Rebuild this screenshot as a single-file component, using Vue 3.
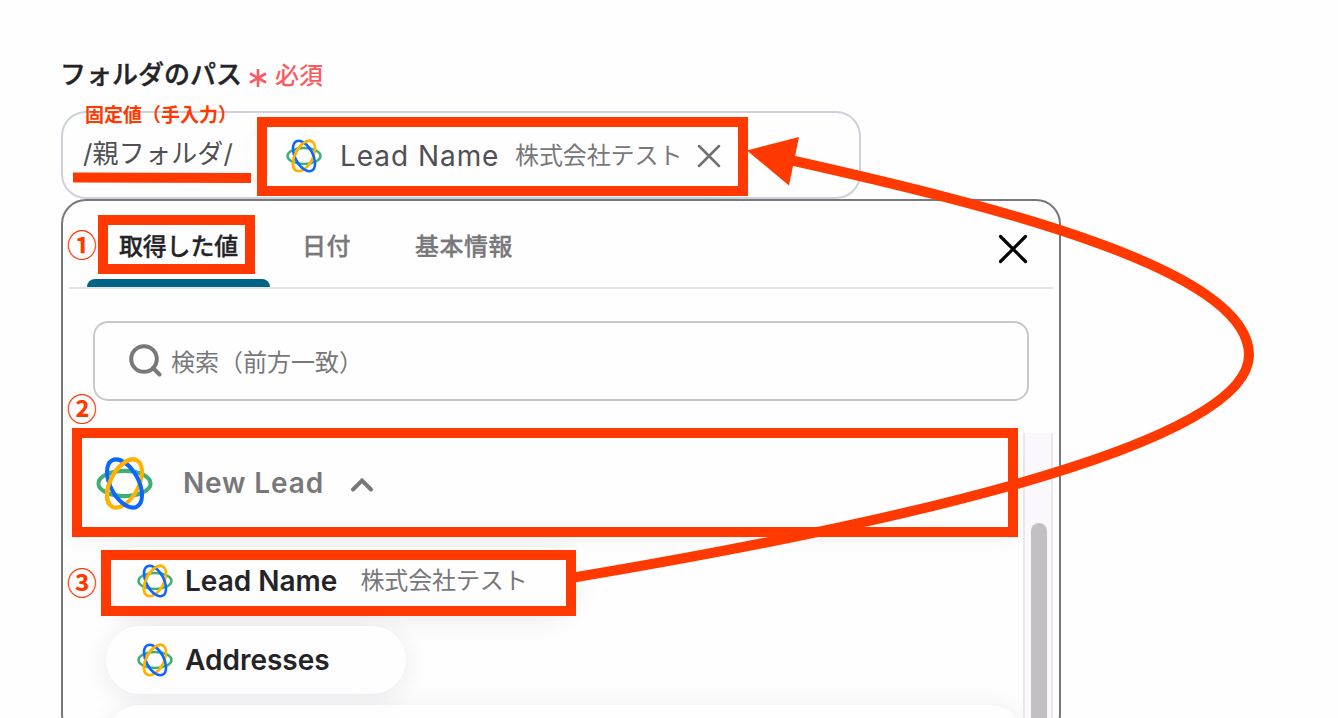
<template>
    <div class="page">
        <svg class="defs" width="0" height="0">
            <symbol id="lead-icon" viewBox="-28 -28 56 56">
                <g fill="none" stroke-width="4">
                    <ellipse rx="25.600" ry="12.400" stroke="#42ae76" />
                    <ellipse rx="25.800" ry="13.800" stroke="#ffb300" transform="rotate(-62)" />
                    <ellipse rx="25.800" ry="13.800" stroke="#0b66ff" transform="rotate(62)" />
                    <path d="M12.100 -22.800A25.800 13.800 -62 0 0 -12.100 22.800" stroke="#ffb300" />
                </g>
            </symbol>
        </svg>

        <div class="field-label">
            <span class="label-name">フォルダのパス</span>
            <svg class="asterisk" width="20" height="20" viewBox="-10 -10 20 20">
                <path d="M0 -9V9M-8 -4.5L8 4.5M-8 4.5L8 -4.5" />
            </svg>
            <span class="required">必須</span>
        </div>

        <div class="path-input">
            <span class="fixed-value">/親フォルダ/</span>
            <div class="token">
                <svg class="icon-small"><use href="#lead-icon" /></svg>
                <span class="token-name">Lead Name</span>
                <span class="sample">株式会社テスト</span>
                <svg class="token-close" width="24" height="24" viewBox="0 0 24 24">
                    <path d="M2 2L22 22M22 2L2 22" />
                </svg>
            </div>
        </div>

        <div class="panel">
            <div class="tabs">
                <button
                    v-for="tab in tabs"
                    :key="tab"
                    class="tab"
                    :class="{ active: tab === currentTab }"
                    @click="currentTab = tab"
                >{{ tab }}</button>
                <svg class="panel-close" width="32" height="32" viewBox="0 0 32 32">
                    <path d="M3.5 3.5L28.5 28.5M28.5 3.5L3.5 28.5" />
                </svg>
            </div>

            <div class="search">
                <svg width="33" height="34" viewBox="0 0 33 34">
                    <circle cx="15" cy="15" r="12.800" />
                    <path d="M24 24L30.500 30.500" />
                </svg>
                <span>検索（前方一致）</span>
            </div>

            <div class="list-area">
                <div class="list">
                    <div class="group" @click="open = !open">
                        <svg class="icon-large"><use href="#lead-icon" /></svg>
                        <span>New Lead</span>
                        <svg class="chevron" width="24" height="16" viewBox="0 0 24 16">
                            <path d="M3 12.5L12 3.5L21 12.5" />
                        </svg>
                    </div>
                    <template v-if="open">
                        <div v-for="item in items" :key="item.name" class="pill" :class="item.size">
                            <svg v-if="item.name" class="icon-small"><use href="#lead-icon" /></svg>
                            <span class="pill-name">{{ item.name }}</span>
                            <span v-if="item.sample" class="sample">{{ item.sample }}</span>
                        </div>
                    </template>
                </div>
                <div class="scroll-track">
                    <div class="scroll-thumb"></div>
                </div>
            </div>
        </div>

        <!-- 説明用の赤枠と矢印 -->
        <svg class="marks" width="1338" height="718" viewBox="0 0 1338 718">
            <g class="mark-line">
                <path d="M73 177.5L251 178" />
                <rect x="262" y="122" width="481" height="69" />
                <rect x="103" y="220" width="147" height="49" />
                <rect x="77" y="433" width="936" height="99" />
                <rect x="106" y="555" width="465" height="56" />
                <path d="M571 578C1000 506 1249 430 1249 355C1249 270 1000 207 790 160" />
            </g>
            <path class="mark-head" d="M747 150.500L799 137L789 185.500Z" />
            <text class="mark-note" x="85" y="122">固定値（手入力）</text>
            <g class="mark-number">
                <text x="67" y="256">①</text>
                <text x="67" y="420">②</text>
                <text x="67" y="594">③</text>
            </g>
        </svg>
    </div>
</template>

<script setup>
import { ref } from "vue";

const tabs = ["取得した値", "日付", "基本情報"];
const currentTab = ref("取得した値");
const open = ref(true);

const items = [
    { name: "Lead Name", sample: "株式会社テスト", size: "medium" },
    { name: "Addresses", size: "small" },
    { name: "", size: "full" },
];
</script>

<style>
body {
    background: #fefefe;
}
</style>

<style scoped>
.page {
    position: relative;
    box-sizing: border-box;
    width: 1338px;
    height: 718px;
    padding: 54px 0 0 61px;
    overflow: hidden;
    background: #fefefe;
    font-family: Inter, "Noto Sans CJK JP", sans-serif;
    color: #242428;
}

.page * {
    box-sizing: border-box;
}

.defs {
    position: absolute;
}

.field-label {
    display: flex;
    align-items: center;
    height: 57px;
    padding-bottom: 21px;
}

.label-name {
    width: 187px;
    font-size: 26px;
    font-weight: 500;
    white-space: nowrap;
    text-indent: -1px;
    -webkit-text-stroke: 0.4px;
}

.asterisk {
    margin-top: 11px;
    fill: none;
    stroke: #fb5a60;
    stroke-width: 2.6;
}

.required {
    margin-left: 7px;
    margin-top: 2px;
    color: #fb5a60;
    font-size: 24px;
    font-weight: 500;
}

.path-input {
    display: flex;
    align-items: center;
    width: 800px;
    height: 88px;
    padding-left: 20px;
    border: 2px solid #cdd1dc;
    border-radius: 25px;
}

.fixed-value {
    width: 165px;
    margin-bottom: 7px;
    color: #505054;
    font-size: 26px;
    letter-spacing: 0.2px;
    white-space: nowrap;
}

.token {
    display: flex;
    align-items: center;
    height: 72px;
    width: 500px;
    margin-top: 2px;
    padding-left: 38px;
    border-radius: 36px;
    box-shadow: 0 2px 14px rgba(40, 20, 60, 0.04);
    white-space: nowrap;
}

.icon-small {
    width: 36px;
    height: 36px;
    flex: none;
}

.token-name {
    width: 175px;
    margin-left: 18px;
    color: #505054;
    font-size: 28px;
    letter-spacing: 0.95px;
}

.sample {
    margin-bottom: 5px;
    color: #78787a;
    font-size: 24px;
    letter-spacing: -0.1px;
}

.token-close {
    margin-left: 15px;
    fill: none;
    stroke: #707072;
    stroke-width: 2.5;
    stroke-linecap: round;
}

.panel {
    width: 1000px;
    height: 540px;
    border: 2px solid #78787a;
    border-radius: 25px;
    background: #fefefe;
}

.tabs {
    display: flex;
    height: 88px;
    margin: 0 6px;
    padding-left: 18px;
    border-bottom: 2px solid #e4e4e6;
}

.tab {
    height: 86px;
    padding: 6px 32px 0;
    border: none;
    background: none;
    color: #78787a;
    font: 500 24px/80px Inter, "Noto Sans CJK JP", sans-serif;
    letter-spacing: 0.5px;
    -webkit-text-stroke: 0.3px;
    cursor: pointer;
}

.tab.active {
    position: relative;
    color: #242428;
    letter-spacing: -0.2px;
}

.tab.active::after {
    content: "";
    position: absolute;
    left: 0;
    right: 0;
    bottom: 0;
    height: 8px;
    border-radius: 8px 8px 0 0;
    background: #006488;
}

.panel-close {
    margin: 32px 24px 0 auto;
    fill: none;
    stroke: #000;
    stroke-width: 3.2;
    stroke-linecap: round;
}

.search {
    display: flex;
    align-items: center;
    gap: 9px;
    width: 936px;
    height: 80px;
    margin: 32px 0 0 30px;
    padding-left: 34px;
    border: 2px solid #c8c8cb;
    border-radius: 15px;
    color: #78787a;
    font-size: 24px;
}

.search span {
    margin-bottom: 2px;
}

.search svg {
    fill: none;
    stroke: #78787a;
    stroke-width: 4;
    stroke-linecap: round;
}

.list-area {
    display: flex;
    height: 300px;
    margin-top: 32px;
}

.list {
    display: flex;
    flex-direction: column;
    align-items: flex-start;
    gap: 11px;
    width: 960px;
    padding-left: 9px;
    overflow: hidden;
}

.group {
    display: flex;
    align-items: center;
    flex: none;
    width: 941px;
    height: 103px;
    padding: 0 0 3px 24px;
    color: #78787a;
    font-size: 28px;
    font-weight: 600;
    letter-spacing: 0.85px;
    box-shadow: 0 2px 18px rgba(40, 20, 60, 0.07);
}

.icon-large {
    width: 57px;
    height: 57px;
    margin-right: 30px;
}

.chevron {
    margin-left: 26px;
    margin-top: 4px;
    fill: none;
    stroke: #78787a;
    stroke-width: 4;
    stroke-linecap: round;
}

.pill {
    display: flex;
    align-items: center;
    flex: none;
    height: 68px;
    margin-left: 34px;
    padding: 0 0 1px 31px;
    border-radius: 34px;
    background: #fefefe;
    box-shadow: 0 4px 26px rgba(40, 20, 60, 0.09);
    white-space: nowrap;
}

.pill.medium {
    width: 470px;
}

.pill.small {
    width: 300px;
}

.pill.full {
    width: 918px;
}

.pill-name {
    margin: 1px 23px 0 12px;
    font-size: 28px;
    font-weight: 600;
}

.scroll-track {
    width: 30px;
    border: solid #e9e7eb;
    border-width: 0 2px;
    background: #faf8fc;
}

.scroll-thumb {
    width: 16px;
    height: 220px;
    margin: 90px 0 0 6px;
    border-radius: 8px;
    background: #c2c0c3;
}

.marks {
    position: absolute;
    left: 0;
    top: 0;
    pointer-events: none;
}

.mark-line {
    fill: none;
    stroke: #ff3900;
    stroke-width: 10;
}

.mark-head,
.mark-note,
.mark-number {
    fill: #ff3900;
}

.mark-note {
    font: 700 19px "Noto Sans CJK JP", sans-serif;
}

.mark-number {
    font: 700 30px "Noto Sans CJK JP", sans-serif;
}
</style>
